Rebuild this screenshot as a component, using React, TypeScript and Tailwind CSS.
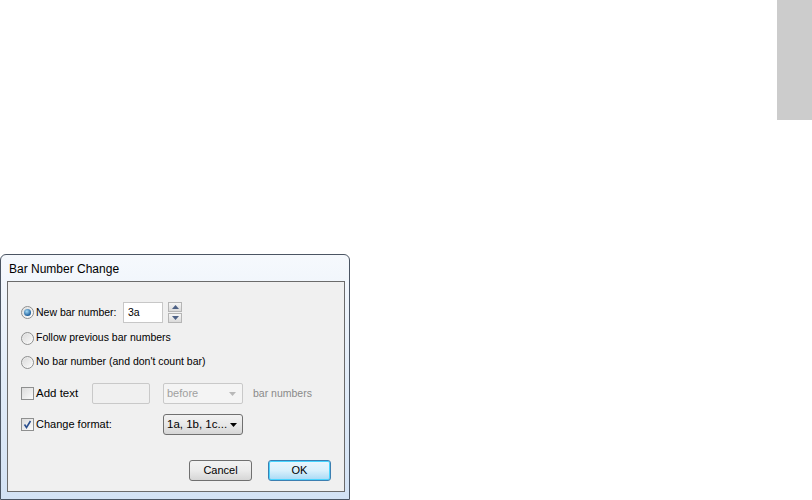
import React from "react";

function Radio({ checked }: { checked?: boolean }) {
  return (
    <span className="relative flex h-[13px] w-[13px] shrink-0 items-center justify-center rounded-full border border-[#8e8f8f] bg-gradient-to-br from-[#e3e3e3] to-[#ffffff]">
      <span className="h-[9px] w-[9px] rounded-full bg-gradient-to-br from-[#dcdcdc] to-[#f8f8f8]">
        {checked && (
          <span className="m-[1px] block h-[7px] w-[7px] rounded-full bg-[radial-gradient(circle_at_40%_35%,#a6dcf8,#1d5f9c_70%)]" />
        )}
      </span>
    </span>
  );
}

function Check({ checked }: { checked?: boolean }) {
  return (
    <span className="flex h-[13px] w-[13px] shrink-0 items-center justify-center border border-[#8e8f8f] bg-white">
      <span className="flex h-[11px] w-[11px] items-center justify-center bg-gradient-to-br from-[#dcdcdc] to-[#fbfbfb]">
        {checked && (
          <svg width="9" height="9" viewBox="0 0 9 9">
            <path d="M1.5 4.5 L3.5 7.5 L7.5 1" fill="none" stroke="#2a4f8f" strokeWidth="1.6" />
          </svg>
        )}
      </span>
    </span>
  );
}

function Arrow({ color, up }: { color: string; up?: boolean }) {
  return (
    <svg width="7" height="4" viewBox="0 0 7 4">
      {up ? <path d="M0 4 L3.5 0 L7 4 Z" fill={color} /> : <path d="M0 0 L7 0 L3.5 4 Z" fill={color} />}
    </svg>
  );
}

export default function App() {
  const font = { fontFamily: '"Liberation Sans", Arial, sans-serif' };
  return (
    <div className="flex h-[500px] w-[812px] flex-col overflow-hidden bg-white" style={font}>
      <div className="h-[120px] w-[35px] shrink-0 self-end bg-[#cccccc]" />
      <div className="mt-[134px] flex h-[246px] w-[350px] shrink-0 flex-col rounded-t-[6px] border border-[#4b5563] bg-gradient-to-b from-[#f6f9fd] via-[#e2ecf8] to-[#d3e2f4] pb-[7px] pl-[6px] pr-[4px]">
        <div className="flex h-[26px] shrink-0 items-center pl-[2px] pt-[2px] text-[12px] text-black">
          Bar Number Change
        </div>
        <div className="flex flex-1 flex-col border border-[#6b6b6b] bg-[#f0f0f0] text-[10.5px] text-black">
          <div className="ml-[13px] mt-[20px] flex h-[21px] items-center">
            <Radio checked />
            <span className="ml-[2px] w-[87px]">New bar number:</span>
            <div className="flex h-[21px] w-[40px] items-center border border-[#c7c7c7] bg-white pl-[4px]">3a</div>
            <div className="ml-[5px] flex h-[21px] w-[14px] flex-col justify-between">
              <div className="flex h-[10px] items-center justify-center border border-[#b5b5b5] bg-gradient-to-b from-[#f6f6f6] to-[#dadada]">
                <Arrow color="#4d6185" up />
              </div>
              <div className="flex h-[10px] items-center justify-center border border-[#b5b5b5] bg-gradient-to-b from-[#f6f6f6] to-[#dadada]">
                <Arrow color="#4d6185" />
              </div>
            </div>
          </div>
          <div className="ml-[13px] mt-[5px] flex h-[20px] items-center">
            <Radio />
            <span className="ml-[2px]">Follow previous bar numbers</span>
          </div>
          <div className="ml-[13px] mt-[4px] flex h-[20px] items-center">
            <Radio />
            <span className="ml-[2px]">No bar number (and don't count bar)</span>
          </div>
          <div className="ml-[13px] mt-[11px] flex h-[21px] items-center">
            <Check />
            <span className="ml-[2px] w-[56px] text-[11.5px]">Add text</span>
            <div className="h-[21px] w-[58px] rounded-[2px] border border-[#c9c9c9] bg-[#f0f0f0]" />
            <div className="ml-[13px] flex h-[21px] w-[80px] items-center justify-between rounded-[2px] border border-[#c9c9c9] bg-[#f4f4f4] pl-[3px] pr-[6px] text-[11px] text-[#a0a0a0]">
              <span>before</span>
              <Arrow color="#b8b8b8" />
            </div>
            <span className="ml-[10px] text-[#8a8a8a]">bar numbers</span>
          </div>
          <div className="ml-[13px] mt-[10px] flex h-[21px] items-center">
            <Check checked />
            <span className="ml-[2px] w-[127px] text-[11px]">Change format:</span>
            <div className="flex h-[21px] w-[80px] items-center justify-between rounded-[3px] border border-[#707070] bg-gradient-to-b from-[#f2f2f2] via-[#e8e8e8] to-[#d6d6d6] pl-[3px] pr-[5px]">
              <span className="text-[11.5px]">1a, 1b, 1c...</span>
              <Arrow color="#000000" />
            </div>
          </div>
          <div className="mr-[13px] mt-[25px] flex justify-end gap-[16px]">
            <div className="flex h-[21px] w-[63px] items-center justify-center rounded-[3px] border border-[#707070] bg-gradient-to-b from-[#f2f2f2] via-[#ebebeb] to-[#d6d6d6] text-[11px]">
              Cancel
            </div>
            <div className="flex h-[21px] w-[63px] items-center justify-center rounded-[3px] border border-[#3c7fb1] bg-gradient-to-b from-[#eaf6fd] via-[#d9f0fc] to-[#a7d9f5] text-[11px] shadow-[inset_0_0_0_1px_#48d4ff]">
              OK
            </div>
          </div>
        </div>
      </div>
    </div>
  );
}
